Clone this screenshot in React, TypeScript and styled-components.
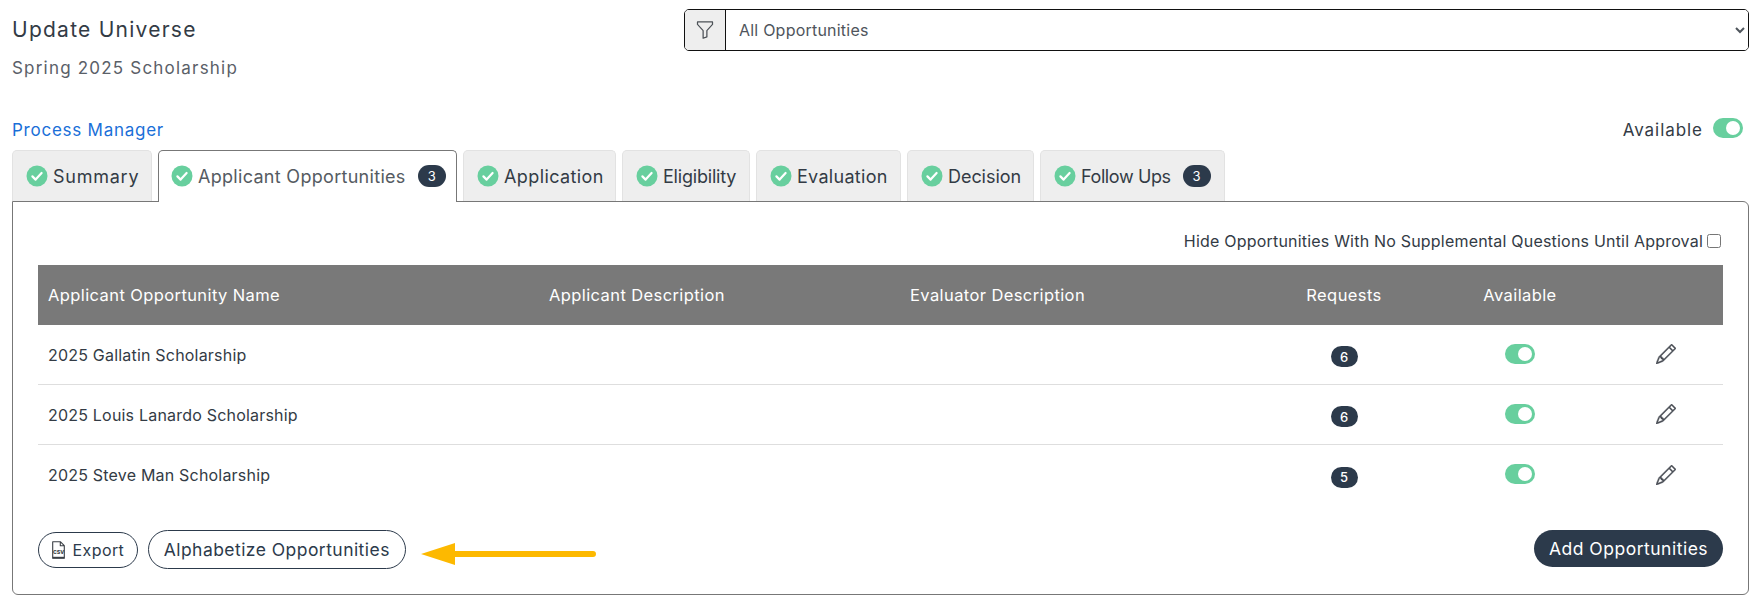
import React from 'react';
import styled, { createGlobalStyle } from 'styled-components';
import { BsFunnel, BsPencil } from 'react-icons/bs';

const GlobalStyle = createGlobalStyle`
  html, body {
    margin: 0;
    background: #fff;
    font-family: Inter, "Open Sans", "Liberation Sans", sans-serif;
    color: #333b45;
  }
`;

const Page = styled.div`
  width: 1761px;
  height: 611px;
  box-sizing: border-box;
  padding: 9px 12px 0 12px;
  overflow: hidden;
`;

const TopRow = styled.div`
  display: flex;
  justify-content: space-between;
  align-items: flex-start;
`;

const Title = styled.div`
  font-size: 21px;
  letter-spacing: 1.25px;
  line-height: 42px;
  color: #333b45;
`;

const Subtitle = styled.div`
  font-size: 17px;
  letter-spacing: 1.2px;
  line-height: 24px;
  margin-top: 5px;
  color: #5a6068;
`;

const FilterGroup = styled.div`
  display: flex;
  width: 1065px;
  height: 42px;
  box-sizing: border-box;
  border: 1.5px solid #111;
  border-radius: 5px;
  overflow: hidden;
`;

const FilterAddon = styled.div`
  display: flex;
  align-items: center;
  justify-content: center;
  width: 40px;
  flex: none;
  background: #eeeeee;
  border-right: 1.5px solid #111;
  color: #4c5157;
  font-size: 20px;
`;

const FilterSelect = styled.select`
  flex: 1;
  border: 0;
  outline: 0;
  background: #fff;
  padding: 0 8px 0 9px;
  font-family: inherit;
  font-size: 16px;
  letter-spacing: 0.22px;
  color: #4f555c;
`;

const ManagerRow = styled.div`
  display: flex;
  justify-content: space-between;
  align-items: center;
  height: 24px;
  margin-top: 38px;
`;

const ManagerLink = styled.a`
  color: #1a6fd8;
  font-size: 17px;
  letter-spacing: 0.75px;
  text-decoration: none;
`;

const AvailableGroup = styled.div`
  display: flex;
  align-items: center;
  gap: 10px;
  font-size: 17px;
  letter-spacing: 0.95px;
  margin-right: 6px;
`;

const Toggle = styled.span`
  display: inline-flex;
  justify-content: flex-end;
  align-items: center;
  width: 30px;
  height: 20px;
  box-sizing: border-box;
  padding: 0 3px;
  border-radius: 10px;
  background: #68cf9e;
  &::after {
    content: '';
    width: 14px;
    height: 14px;
    border-radius: 50%;
    background: #fff;
  }
`;

const TopToggle = styled(Toggle)`
  margin-top: -5px;
`;

const Tabs = styled.div`
  display: flex;
  align-items: flex-start;
  gap: 6px;
  margin-top: 8px;
  position: relative;
  z-index: 1;
`;

const Tab = styled.div<{ $active?: boolean; $width: number; $track: number }>`
  display: flex;
  align-items: center;
  width: ${(p) => p.$width}px;
  height: ${(p) => (p.$active ? 52 : 51)}px;
  box-sizing: border-box;
  padding: 0 0 ${(p) => (p.$active ? 1 : 0)}px ${(p) => (p.$active ? 12 : 13)}px;
  gap: 5px;
  background: ${(p) => (p.$active ? '#fff' : '#eeeeee')};
  border: 1px solid ${(p) => (p.$active ? '#777' : '#e2e2e2')};
  border-bottom: 0;
  border-radius: 5px 5px 0 0;
  font-size: 18px;
  letter-spacing: ${(p) => p.$track}px;
  color: ${(p) => (p.$active ? '#555b62' : '#333b45')};
`;

const TabCount = styled.span`
  display: flex;
  align-items: center;
  justify-content: center;
  width: 28px;
  height: 22px;
  margin-left: 7px;
  border-radius: 11px;
  background: #2c3a4b;
  color: #fff;
  font-size: 13px;
  letter-spacing: 0;
`;

const Panel = styled.div`
  width: 1737px;
  height: 394px;
  margin-top: -1px;
  box-sizing: border-box;
  border: 1px solid #777;
  border-radius: 0 6px 6px 6px;
  padding: 29px 25px 0 25px;
`;

const HideRow = styled.label`
  display: flex;
  justify-content: flex-end;
  align-items: center;
  gap: 4px;
  height: 20px;
  font-size: 16px;
  letter-spacing: 0.2px;
  color: #333b45;
  input {
    width: 14px;
    height: 14px;
    margin: 0 2px 0 0;
  }
`;

const Row = styled.div`
  display: grid;
  grid-template-columns: 501px 361px 356px 176px 176px 115px;
  align-items: center;
`;

const HeadRow = styled(Row)`
  height: 60px;
  margin-top: 14px;
  background: #797979;
  color: #fff;
  font-size: 16.5px;
  letter-spacing: 0.4px;
`;

const BodyRow = styled(Row)`
  height: 60px;
  box-sizing: border-box;
  font-size: 16px;
  letter-spacing: 0.2px;
  border-bottom: 1px solid #dedede;
  &:last-of-type {
    border-bottom: 0;
  }
`;

const Cell = styled.div<{ $center?: boolean }>`
  display: flex;
  align-items: center;
  justify-content: ${(p) => (p.$center ? 'center' : 'flex-start')};
  padding-left: ${(p) => (p.$center ? 0 : 10)}px;
`;

const CountBadge = styled.span`
  display: flex;
  align-items: center;
  justify-content: center;
  width: 27px;
  height: 21px;
  margin-top: 4px;
  border-radius: 11px;
  background: #2c3a4b;
  color: #fff;
  font-size: 13px;
  font-weight: 500;
  letter-spacing: 0;
`;

const SwitchCell = styled(Cell)`
  margin-top: -2px;
`;

const EditIcon = styled(BsPencil)`
  width: 20px;
  height: 20px;
  color: #4a4f56;
  stroke: #4a4f56;
  stroke-width: 0.3px;
  margin-top: -1px;
`;

const Footer = styled.div`
  display: flex;
  align-items: center;
  height: 39px;
  margin-top: 25px;
`;

const OutlineButton = styled.button<{ $height: number; $pad: number }>`
  display: flex;
  align-items: center;
  gap: 8px;
  height: ${(p) => p.$height}px;
  padding: 0 ${(p) => p.$pad}px;
  background: #fff;
  border: 1px solid #2c3a4b;
  border-radius: 20px;
  font-family: inherit;
  font-size: 16px;
  letter-spacing: 0.42px;
  color: #2c3a4b;
`;

const AlphaButton = styled(OutlineButton)`
  margin-left: 10px;
  width: 258px;
  justify-content: center;
  padding: 0;
  font-size: 17.5px;
  letter-spacing: 0.45px;
`;

const ArrowMark = styled.svg`
  margin: 8px 0 0 15px;
  flex: none;
`;

const AddButton = styled.button`
  margin-left: auto;
  align-self: flex-start;
  height: 37px;
  width: 189px;
  padding: 0;
  background: #2c3a4b;
  border: 0;
  border-radius: 19px;
  font-family: inherit;
  font-size: 17.5px;
  letter-spacing: 0.5px;
  color: #fff;
`;

const CheckIcon = () => (
  <svg width="22" height="22" viewBox="0 0 22 22" style={{ flex: 'none' }}>
    <circle cx="11" cy="11" r="10.5" fill="#68cf9e" />
    <path d="M6.4 11.4l3.2 3.2 6-6.6" fill="none" stroke="#fff" strokeWidth="2.2" strokeLinecap="round" strokeLinejoin="round" />
  </svg>
);

const CsvIcon = () => (
  <svg width="13" height="18" viewBox="0 0 13 18" style={{ flex: 'none' }}>
    <path d="M.7.7h7.6l4 4v12.6H.7Z M8.3.7v4h4" fill="none" stroke="#3a3f45" strokeWidth="1.1" strokeLinejoin="round" />
    <path d="M.7 15.8h11.6v1.6H.7Z" fill="#3a3f45" />
    <text x="6.5" y="13" textAnchor="middle" fontSize="6.5" fontWeight="700" letterSpacing="-0.2" fill="#3a3f45">csv</text>
  </svg>
);

const tabs = [
  { label: 'Summary', width: 140, track: 0.75 },
  { label: 'Applicant Opportunities', width: 299, active: true, count: 3, track: 0.3 },
  { label: 'Application', width: 153, track: 0.4 },
  { label: 'Eligibility', width: 128, track: -0.2 },
  { label: 'Evaluation', width: 145, track: 0.3 },
  { label: 'Decision', width: 127, track: -0.05 },
  { label: 'Follow Ups', width: 185, count: 3, track: -0.4 },
];

const opportunities = [
  { name: '2025 Gallatin Scholarship', requests: 6 },
  { name: '2025 Louis Lanardo Scholarship', requests: 6 },
  { name: '2025 Steve Man Scholarship', requests: 5 },
];

export default function App() {
  return (
    <Page>
      <GlobalStyle />
      <TopRow>
        <div>
          <Title>Update Universe</Title>
          <Subtitle>Spring 2025 Scholarship</Subtitle>
        </div>
        <FilterGroup>
          <FilterAddon>
            <BsFunnel />
          </FilterAddon>
          <FilterSelect defaultValue="all">
            <option value="all">All Opportunities</option>
          </FilterSelect>
        </FilterGroup>
      </TopRow>

      <ManagerRow>
        <ManagerLink href="#">Process Manager</ManagerLink>
        <AvailableGroup>
          Available
          <TopToggle />
        </AvailableGroup>
      </ManagerRow>

      <Tabs>
        {tabs.map((t) => (
          <Tab key={t.label} $active={t.active} $width={t.width} $track={t.track}>
            <CheckIcon />
            {t.label}
            {t.count && <TabCount>{t.count}</TabCount>}
          </Tab>
        ))}
      </Tabs>

      <Panel>
        <HideRow>
          Hide Opportunities With No Supplemental Questions Until Approval
          <input type="checkbox" />
        </HideRow>

        <HeadRow>
          <Cell>Applicant Opportunity Name</Cell>
          <Cell>Applicant Description</Cell>
          <Cell>Evaluator Description</Cell>
          <Cell $center>Requests</Cell>
          <Cell $center>Available</Cell>
          <Cell />
        </HeadRow>
        <div>
          {opportunities.map((o) => (
            <BodyRow key={o.name}>
              <Cell>{o.name}</Cell>
              <Cell />
              <Cell />
              <Cell $center>
                <CountBadge>{o.requests}</CountBadge>
              </Cell>
              <SwitchCell $center>
                <Toggle />
              </SwitchCell>
              <Cell $center>
                <EditIcon />
              </Cell>
            </BodyRow>
          ))}
        </div>

        <Footer>
          <OutlineButton $height={36} $pad={12.5}>
            <CsvIcon />
            Export
          </OutlineButton>
          <AlphaButton $height={39} $pad={0}>Alphabetize Opportunities</AlphaButton>
          <ArrowMark width="176" height="22" viewBox="0 0 176 22">
            <path d="M0 11L34 0V8H172a3 3 0 0 1 0 6H34V22Z" fill="#fdb900" />
          </ArrowMark>
          <AddButton>Add Opportunities</AddButton>
        </Footer>
      </Panel>
    </Page>
  );
}
